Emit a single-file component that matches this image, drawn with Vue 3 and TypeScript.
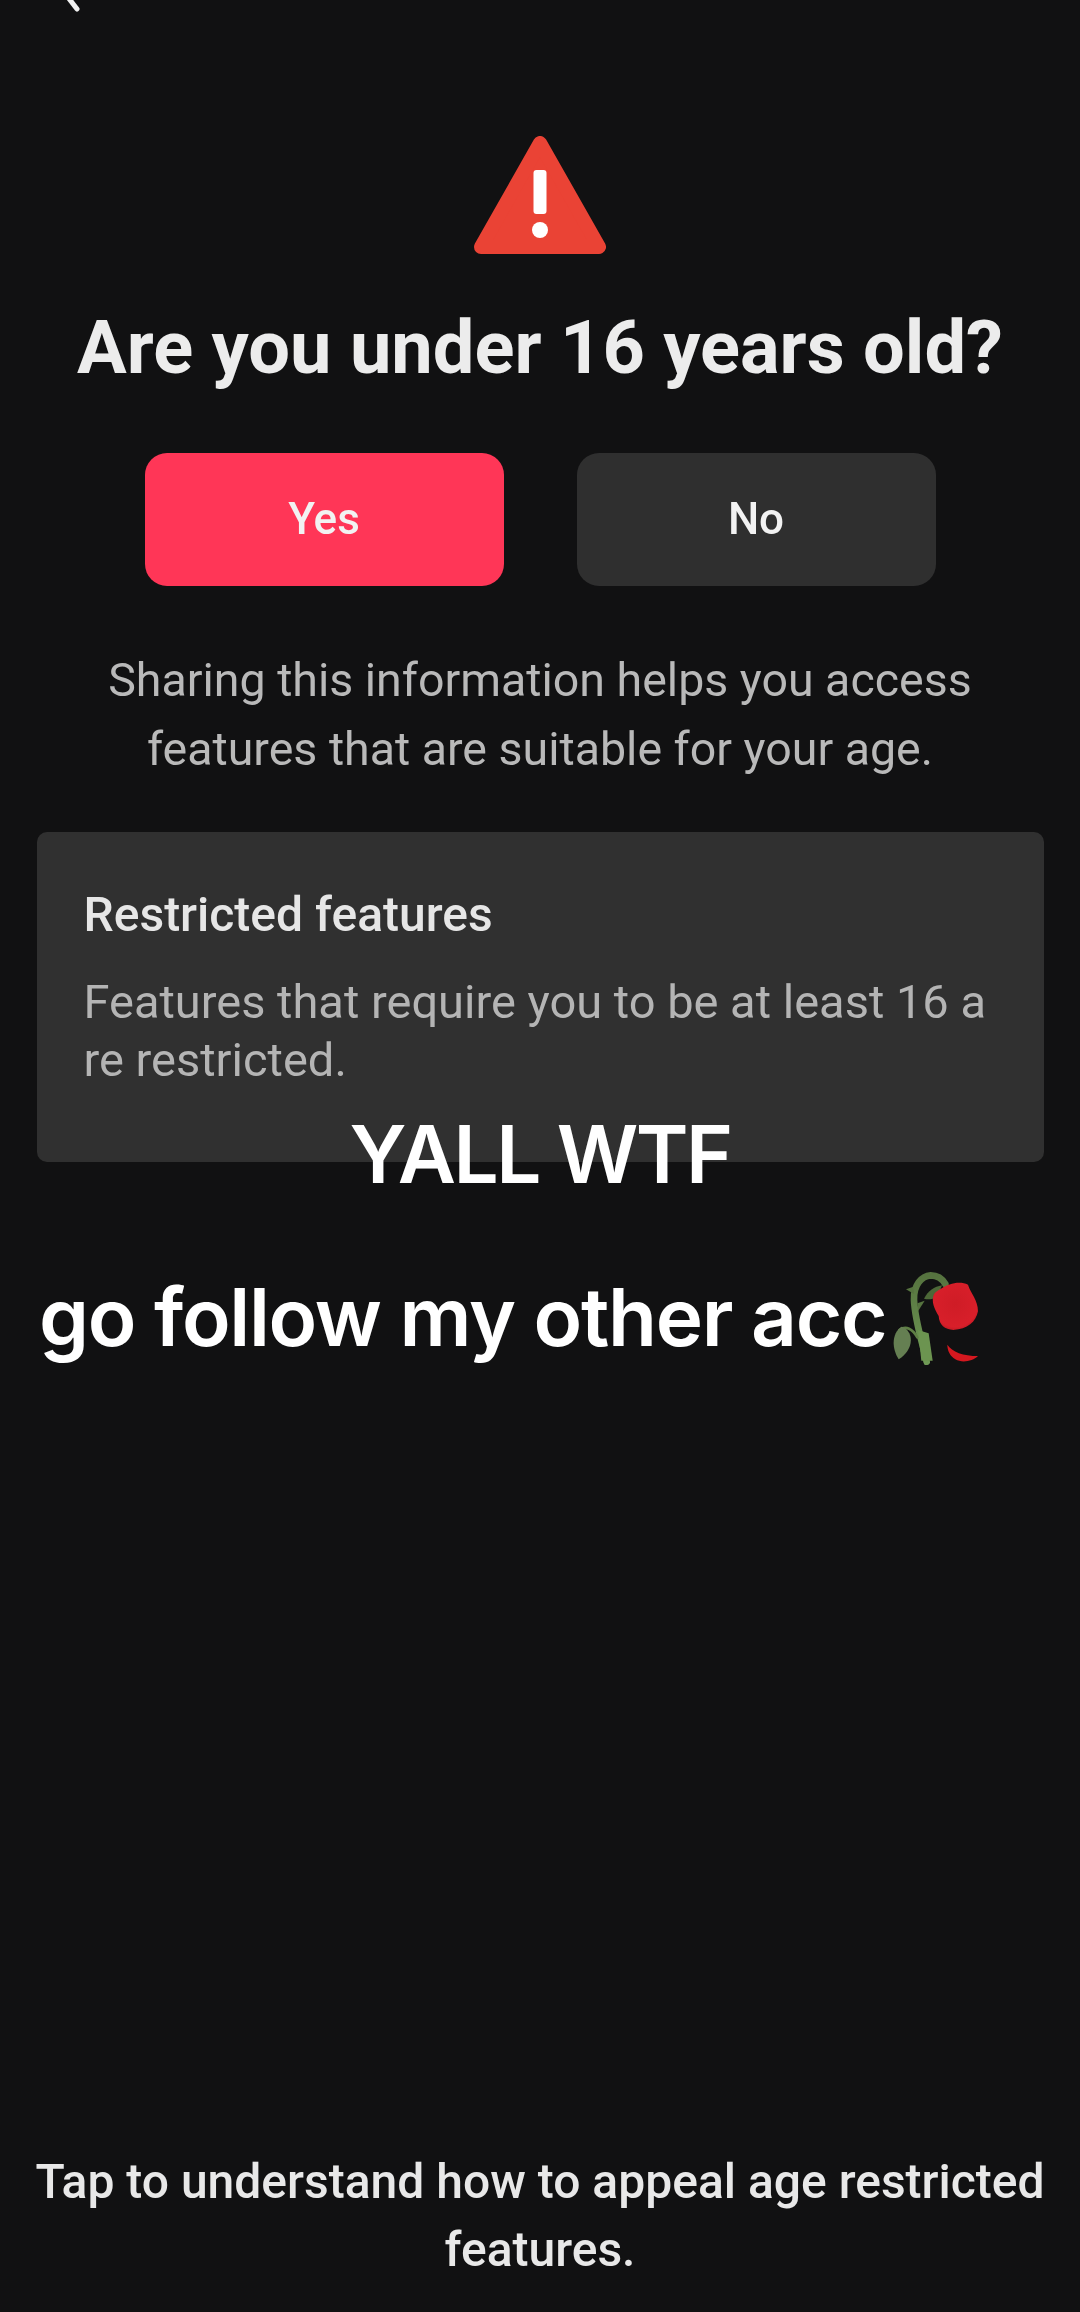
<script setup lang="ts">
// Static age check screen with the two caption lines on top
const answers = [
  { label: 'Yes', primary: true },
  { label: 'No', primary: false },
]
</script>

<template>
  <div class="screen">
    <svg class="back" width="24" height="20" viewBox="0 0 24 20">
      <path d="M5 -4 L15 9" fill="none" stroke="#f2f2f2" stroke-width="5" stroke-linecap="round" />
    </svg>

    <svg class="warning" width="134" height="121" viewBox="0 0 134 121">
      <path
        d="M67 8 L126 112 H8 Z"
        fill="#ea4335"
        stroke="#ea4335"
        stroke-width="14"
        stroke-linejoin="round"
      />
      <rect x="60.5" y="35" width="13" height="44" rx="3" fill="#fff" />
      <circle cx="67" cy="95" r="8" fill="#fff" />
    </svg>

    <h1 class="title">Are you under 16 years old?</h1>

    <div class="answers">
      <button
        v-for="answer in answers"
        :key="answer.label"
        type="button"
        class="answer"
        :class="{ primary: answer.primary }"
      >
        {{ answer.label }}
      </button>
    </div>

    <p class="intro">
      Sharing this information helps you access<br />features that are suitable for your age.
    </p>

    <section class="card">
      <h2 class="card-title">Restricted features</h2>
      <p class="card-text">Features that require you to be at least 16 a<br />re restricted.</p>
    </section>

    <p class="appeal">Tap to understand how to appeal age restricted<br />features.</p>

    <div class="caption caption-top">YALL WTF</div>
    <div class="caption caption-follow">
      <span>go follow my other acc</span>
      <svg class="rose" width="140" height="130" viewBox="0 0 420 390">
        <defs>
          <linearGradient id="stem" x1="0" y1="0" x2="0" y2="1">
            <stop offset="0" stop-color="#56733f" />
            <stop offset="1" stop-color="#6f9a55" />
          </linearGradient>
          <radialGradient id="bloom" cx="0.5" cy="0.45" r="0.65">
            <stop offset="0" stop-color="#cf1c26" />
            <stop offset="0.75" stop-color="#d81f2a" />
            <stop offset="1" stop-color="#a5111a" />
          </radialGradient>
        </defs>
        <path
          d="M200 335 C188 280 165 215 162 150 C160 105 185 78 212 76 C232 76 248 88 256 102"
          fill="none"
          stroke="url(#stem)"
          stroke-width="20"
          stroke-linecap="round"
        />
        <path d="M184 332 L218 332 L206 250 L174 240 Z" fill="#6c9450" />
        <path d="M138 118 L160 110 L162 132 Z" fill="#56733f" />
        <path d="M172 160 L194 152 L174 184 Z" fill="#56733f" />
        <path d="M192 146 C205 122 222 110 246 106 L232 142 C218 148 204 150 192 146 Z" fill="#4d6838" />
        <path
          d="M118 240 C138 226 158 236 172 262"
          fill="none"
          stroke="#5f7f45"
          stroke-width="8"
          stroke-linecap="round"
        />
        <path
          d="M124 230 C98 248 92 290 116 328 C142 312 162 280 148 250 C142 238 134 232 124 230 Z"
          fill="#657f52"
        />
        <path
          d="M243 116 C266 100 300 92 324 104 C332 130 354 150 354 184 C348 216 322 238 280 240 C254 238 238 226 236 198 C224 178 212 154 222 132 C228 124 236 120 243 116 Z"
          fill="url(#bloom)"
        />
        <path d="M262 284 C276 306 310 318 354 318 C338 334 306 340 286 328 C270 318 262 302 262 284 Z" fill="#d5181f" />
      </svg>
    </div>
  </div>
</template>

<style scoped>
.screen {
  position: relative;
  box-sizing: border-box;
  width: 1080px;
  height: 2312px;
  overflow: hidden;
  background: #111112;
  display: flex;
  flex-direction: column;
  align-items: center;
  font-family: Roboto, "Liberation Sans", sans-serif;
  padding-top: 135px;
}

.back {
  position: absolute;
  left: 62px;
  top: 0;
}

.warning {
  flex: none;
}

.warning,
.title,
.answers,
.intro,
.card,
.appeal {
  filter: blur(0.6px);
}

.title {
  margin: 52px 0 0;
  font-size: 74px;
  line-height: 80px;
  font-weight: 700;
  color: #ececec;
  white-space: nowrap;
}

.answers {
  display: flex;
  gap: 73px;
  margin-top: 65px;
}

.answer {
  width: 359px;
  height: 133px;
  padding: 0 0 2px;
  border: none;
  border-radius: 22px;
  background: #2f2f2f;
  color: #f2f2f2;
  font-family: inherit;
  font-size: 44px;
  font-weight: 500;
}

.answer.primary {
  background: #ff3657;
}

.intro {
  margin: 60px 0 0;
  font-size: 46.5px;
  line-height: 69px;
  color: #b9b9b9;
  text-align: center;
  white-space: nowrap;
}

.card {
  box-sizing: border-box;
  width: 1007px;
  height: 330px;
  margin-top: 48px;
  padding: 55px 47px 0;
  border-radius: 10px;
  background: #303030;
}

.card-title {
  margin: 0;
  font-size: 48px;
  line-height: 56px;
  font-weight: 500;
  color: #e6e6e6;
}

.card-text {
  margin: 30px 0 0;
  font-size: 47px;
  line-height: 58px;
  color: #b4b4b4;
  white-space: nowrap;
}

.appeal {
  margin: auto 0 28px;
  font-size: 48px;
  line-height: 68px;
  font-weight: 500;
  color: #e8e8e8;
  text-align: center;
  white-space: nowrap;
}

.caption {
  position: absolute;
  color: #fff;
  font-family: Inter, "Liberation Sans", sans-serif;
  font-size: 80px;
  line-height: 92px;
  font-weight: 600;
  white-space: nowrap;
}

.caption-top {
  left: 0;
  right: 0;
  top: 1108px;
  text-align: center;
  letter-spacing: -2.5px;
}

.caption-follow {
  left: 39px;
  top: 1271px;
  display: flex;
  align-items: flex-start;
  letter-spacing: -1.3px;
}

.rose {
  position: absolute;
  left: 821px;
  top: -21px;
  filter: blur(0.5px);
}
</style>
